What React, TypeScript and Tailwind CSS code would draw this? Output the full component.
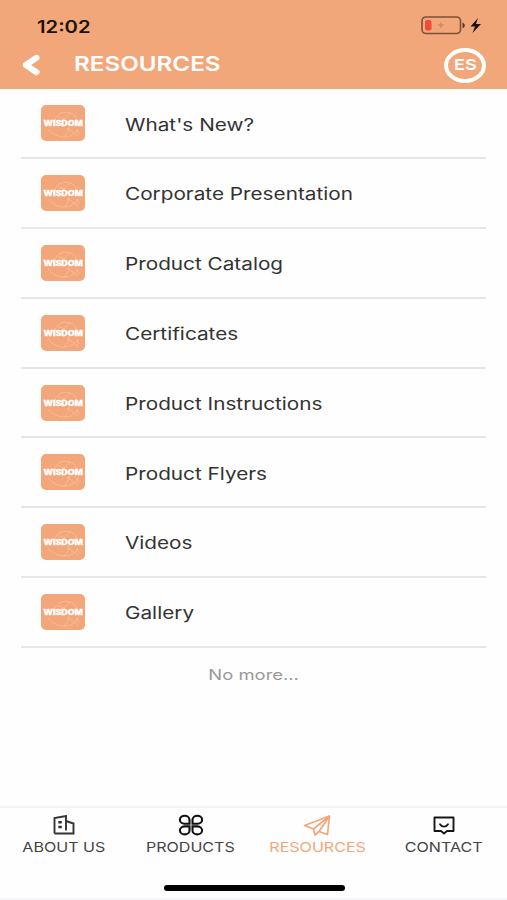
import type { ReactNode } from "react";
import clsx from "clsx";

const resources = [
  "What's New?",
  "Corporate Presentation",
  "Product Catalog",
  "Certificates",
  "Product Instructions",
  "Product Flyers",
  "Videos",
  "Gallery",
];

function BrandTile() {
  return (
    <svg viewBox="0 0 44 36" className="w-11 h-9 shrink-0">
      <rect width="44" height="36" rx="5" fill="#f3a67a" />
      <g fill="none" stroke="#f9cdb2" strokeWidth="0.8" opacity="0.7">
        <path d="M14 15c2-7 9-9 15-7 5 1 7 5 6 10" />
        <path d="M7 24c4 5 10 8 16 8 7 0 11-3 14-8" />
        <path d="M17 12c5 0 10 4 11 10 0 4-2 7-5 10" />
        <path d="M29 8c-4 3-8 8-10 13" />
        <path d="M26 23l11 8M36 24l2 5" />
      </g>
      <text
        x="2.500"
        y="20.800"
        textLength="39.500"
        lengthAdjust="spacingAndGlyphs"
        fill="#fff"
        stroke="#fff"
        strokeWidth="0.3"
        fontFamily="Inter, sans-serif"
        fontWeight="800"
        fontSize="7.400"
      >
        WISDOM
      </text>
    </svg>
  );
}

function StatusBar() {
  return (
    <div className="flex h-[50px] items-center justify-between pl-[37px] pr-[25px] pt-0.5">
      <span className="mt-[3px] inline-block origin-left scale-x-[1.19] text-[17px] font-semibold text-[#1c120c]">
        12:02
      </span>
      <svg viewBox="0 0 62 20" className="h-5 w-[62px]">
        <rect x="2" y="1" width="38.500" height="16.500" rx="4" fill="none" stroke="#7d4f35" strokeWidth="1.600" />
        <path d="M42.500 6.500c3 .8 3 5 0 5.800z" fill="#5c3823" />
        <rect x="5" y="4" width="6.500" height="10.500" rx="2" fill="#ee4b3c" />
        <path d="M21 6.500v5.500M18 9.200h6" stroke="#ca8560" strokeWidth="1.200" />
        <path d="M58 2l-7.500 8.500h4.500l-2.500 6.500 8.500-9h-5z" fill="#1c120c" />
      </svg>
    </div>
  );
}

function Header() {
  return (
    <header className="h-[89px] bg-[#f2a77b]">
      <StatusBar />
      <div className="flex h-[30px] items-center pl-[22px] pr-[21px] text-white">
        <svg viewBox="0 0 18 22" className="h-[22px] w-[18px]">
          <path d="M14.500 3.800L3.800 11l10.700 7.200" fill="none" stroke="currentColor" strokeWidth="6" strokeLinecap="round" strokeLinejoin="round" />
        </svg>
        <h1 className="-mt-0.5 ml-[34px] origin-left scale-x-[1.21] text-[20px] leading-none font-semibold">
          RESOURCES
        </h1>
        <div className="ml-auto flex h-[35px] w-[42px] shrink-0 items-center justify-center rounded-[50%] border-4 border-white">
          <span className="scale-x-[1.220] text-[15px] font-semibold">ES</span>
        </div>
      </div>
    </header>
  );
}

function TabItem({ label, active, children }: { label: string; active?: boolean; children: ReactNode }) {
  return (
    <div className={clsx("flex w-1/4 flex-col items-center", active ? "text-[#f2a77b]" : "text-[#171717]")}>
      <div className="flex h-[22px] items-center">{children}</div>
      <span className={clsx("mt-[3px] scale-x-[1.190] text-[13.500px] leading-4 whitespace-nowrap", !active && "text-[#444]")}>
        {label}
      </span>
    </div>
  );
}

function TabBar() {
  return (
    <nav className="flex h-[73px] border-t-2 border-[#f5f5f7] pt-[6px] pl-px">
      <TabItem label="ABOUT US">
        <svg viewBox="0 0 22 20" className="h-5 w-[22px]" fill="none" stroke="#333" strokeWidth="1.900">
          <path d="M1.500 18.500V3l11.500-2v14.500M13 6l7.500 2.500v10h-19" />
          <path d="M5.300 7.200h3.500M5.300 12h3.500" strokeWidth="2.600" />
        </svg>
      </TabItem>
      <TabItem label="PRODUCTS">
        <svg viewBox="0 0 26 22" className="h-[22px] w-[26px]" fill="none" stroke="#111" strokeWidth="2.100">
          <path d="M11.500 9.800H6.500a4.800 4 0 1 1 5-4z" />
          <path d="M14.500 9.800h5a4.800 4 0 1 0-5-4z" />
          <path d="M11.500 12.400H6.500a4.800 4 0 1 0 5 4z" />
          <path d="M14.500 12.400h5a4.800 4 0 1 1-5 4z" />
        </svg>
      </TabItem>
      <TabItem label="RESOURCES" active>
        <svg viewBox="0 0 28 21" className="h-[21px] w-7" fill="none" stroke="currentColor" strokeWidth="1.700" strokeLinejoin="round">
          <path d="M26.500 1L1.500 10.500l9 3.500 1.500 6 4-3.500 8.500 3z" />
          <path d="M26.500 1l-16 13M26.500 1L16 16.500" />
        </svg>
      </TabItem>
      <TabItem label="CONTACT">
        <svg viewBox="0 0 22 20" className="h-5 w-[22px]" fill="none" stroke="#171717" strokeWidth="1.900" strokeLinejoin="round">
          <path d="M1.500 2.500h19v13.500h-6.500l-3 2.500-3-2.500H1.500z" />
          <path d="M7 9.200c2 3.200 6 3.200 8 0" strokeLinecap="round" />
        </svg>
      </TabItem>
    </nav>
  );
}

export default function App() {
  return (
    <div className="flex h-[900px] w-[507px] flex-col overflow-hidden bg-[#fefefe] font-['Inter',sans-serif]">
      <Header />
      <main className="flex-1 pt-[0.5px]">
        <ul className="mx-[21px]">
          {resources.map((name) => (
            <li key={name} className="flex h-[69.800px] items-center border-b-2 border-[#e6e6e6] pl-5">
              <BrandTile />
              <span className="mt-1 ml-10 inline-block origin-left scale-x-[1.220] text-[17px] whitespace-nowrap text-[#333]">
                {name}
              </span>
            </li>
          ))}
        </ul>
        <p className="mt-[17px] text-center text-[14.500px] leading-5 text-[#999]">
          <span className="inline-block scale-x-[1.270]">No more...</span>
        </p>
      </main>
      <TabBar />
      <div className="flex h-[21px] shrink-0 justify-center border-b-2 border-[#f5f5f7] pt-[6px] pl-px">
        <div className="h-[6px] w-[181px] rounded-full bg-black" />
      </div>
    </div>
  );
}
